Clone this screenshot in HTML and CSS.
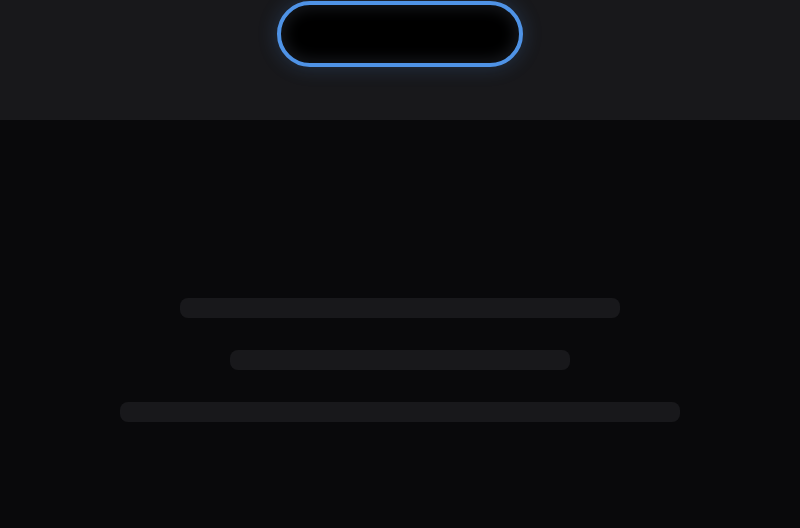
FILE: index.html
```html
<!DOCTYPE html>
<html lang="en">
<head>
<meta charset="utf-8">
<title>Loading</title>
<link rel="stylesheet" href="styles.css">
</head>
<body>
<header class="top">
  <div class="island"></div>
</header>
<main class="content">
  <div class="skeleton">
    <div class="line line-a"></div>
    <div class="line line-b"></div>
    <div class="line line-c"></div>
  </div>
</main>
</body>
</html>
```
FILE: styles.css
```css
html, body {
  margin: 0;
  padding: 0;
  height: 100%;
}
body {
  background: #09090b;
  font-family: "Liberation Sans", Arial, sans-serif;
  display: flex;
  flex-direction: column;
  overflow: hidden;
}
.top {
  height: 120px;
  background: #18181b;
  display: flex;
  justify-content: center;
  align-items: flex-start;
  flex-shrink: 0;
}
.island {
  margin-top: 1px;
  width: 238px;
  height: 58px;
  border: 4px solid #4f93e6;
  border-radius: 40px;
  background: #000;
  box-shadow: 0 0 20px rgba(79, 147, 230, 0.22), inset 0 0 14px 4px #15171b;
}
.content {
  flex: 1;
  display: flex;
  justify-content: center;
}
.skeleton {
  margin-top: 178px;
  display: flex;
  flex-direction: column;
  align-items: center;
  gap: 32px;
}
.line {
  height: 20px;
  border-radius: 8px;
  background: #18181b;
}
.line-a { width: 440px; }
.line-b { width: 340px; }
.line-c { width: 560px; }
```
